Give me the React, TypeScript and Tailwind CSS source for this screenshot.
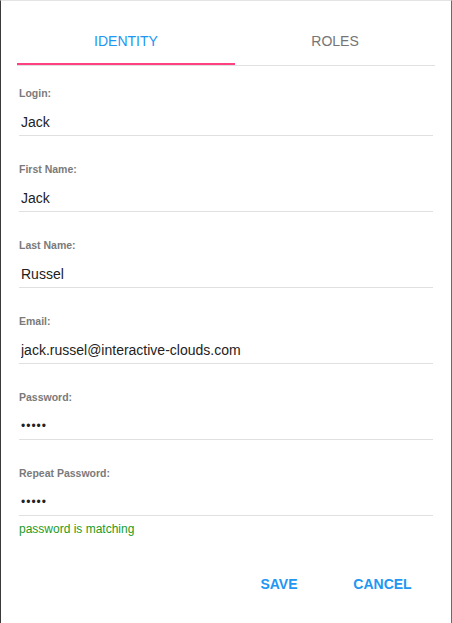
import { useState } from 'react';

type Field = {
    label: string;
    value: string;
    type?: string;
};

const fields: Field[] = [
    { label: 'Login:', value: 'Jack' },
    { label: 'First Name:', value: 'Jack' },
    { label: 'Last Name:', value: 'Russel' },
    { label: 'Email:', value: 'jack.russel@interactive-clouds.com' },
    { label: 'Password:', value: '12345', type: 'password' },
    { label: 'Repeat Password:', value: '12345', type: 'password' },
];

const App = () => {
    const [tab, setTab] = useState<'identity' | 'roles'>('identity');

    return (
        <div
            className="h-[623px] w-[452px] border-t border-l border-r border-t-[#e3e3e3] border-l-[#3a3a3a] border-r-[#6a6a6a] bg-white"
            style={{ fontFamily: '"Liberation Sans", Arial, sans-serif' }}
        >
            <div className="px-4 pt-4">
                <div className="flex border-b border-[#e0e0e0]">
                    <button
                        onClick={() => setTab('identity')}
                        className={
                            'flex h-[48px] w-[218px] items-center justify-center border-b-2 pt-[2px] text-[14px] uppercase ' +
                            (tab === 'identity'
                                ? 'border-[#ff4081] text-[#2196f3]'
                                : 'border-transparent text-[#757575]')
                        }
                    >
                        Identity
                    </button>
                    <button
                        onClick={() => setTab('roles')}
                        className={
                            'flex h-[48px] flex-1 items-center justify-center border-b-2 pt-[2px] text-[14px] uppercase ' +
                            (tab === 'roles'
                                ? 'border-[#ff4081] text-[#2196f3]'
                                : 'border-transparent text-[#757575]')
                        }
                    >
                        Roles
                    </button>
                </div>

                <form className="px-[2px]">
                    {fields.map((f, i) => (
                        <div
                            key={f.label}
                            className={
                                'flex flex-col border-b border-[#e0e0e0] pb-[3px] ' +
                                (i === 0 ? 'pt-[21px]' : 'pt-[27px]')
                            }
                        >
                            <label className="text-[10.5px] leading-[12px] font-bold text-[#7a7a7a]">
                                {f.label}
                            </label>
                            <input
                                type={f.type ?? 'text'}
                                defaultValue={f.value}
                                className={
                                    'mt-[13px] h-[20px] pl-[2px] leading-[20px] text-[#222] outline-none ' +
                                    (f.type === 'password'
                                        ? 'text-[12px] tracking-[1px]'
                                        : 'text-[14px]')
                                }
                            />
                        </div>
                    ))}
                    <div className="mt-[5px] text-[12px] leading-[16px] text-[#239b23]">
                        password is matching
                    </div>
                </form>
            </div>

            <div className="mt-[29px] flex justify-end gap-[15px] pr-[24px]">
                <button className="h-[36px] w-[88px] text-[14px] font-bold text-[#2196f3] uppercase">
                    Save
                </button>
                <button className="h-[36px] w-[89px] text-[14px] font-bold text-[#2196f3] uppercase">
                    Cancel
                </button>
            </div>
        </div>
    );
};

export default App;
